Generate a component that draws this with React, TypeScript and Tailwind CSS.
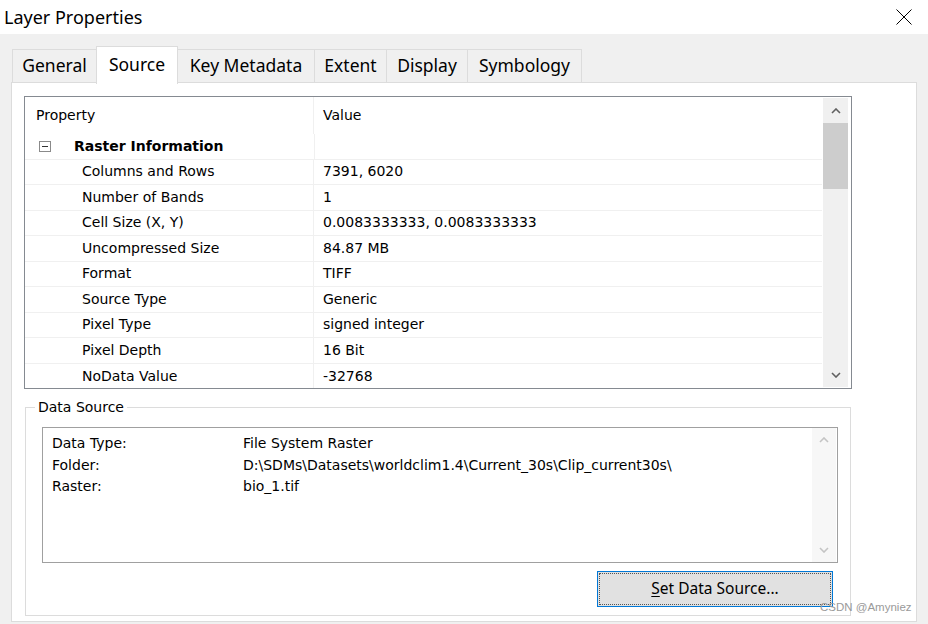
import type { FC } from 'react'

const tabs: [string, string][] = [
  ['General', 'w-[85px]'],
  ['Source', 'w-[82px]'],
  ['Key Metadata', 'w-[138px]'],
  ['Extent', 'w-[73px]'],
  ['Display', 'w-[82px]'],
  ['Symbology', 'w-[115px]'],
]

const rows: [string, string][] = [
  ['Columns and Rows', '7391, 6020'],
  ['Number of Bands', '1'],
  ['Cell Size (X, Y)', '0.0083333333, 0.0083333333'],
  ['Uncompressed Size', '84.87 MB'],
  ['Format', 'TIFF'],
  ['Source Type', 'Generic'],
  ['Pixel Type', 'signed integer'],
  ['Pixel Depth', '16 Bit'],
  ['NoData Value', '-32768'],
]

const sourceLines: [string, string][] = [
  ['Data Type:', 'File System Raster'],
  ['Folder:', 'D:\\SDMs\\Datasets\\worldclim1.4\\Current_30s\\Clip_current30s\\'],
  ['Raster:', 'bio_1.tif'],
]

const Chevron: FC<{ up?: boolean; color?: string }> = ({ up, color = '#606060' }) => (
  <svg width="10" height="6" viewBox="0 0 10 6">
    <path
      d={up ? 'M1 5 L5 1 L9 5' : 'M1 1 L5 5 L9 1'}
      fill="none"
      stroke={color}
      strokeWidth="1.6"
    />
  </svg>
)

const App: FC = () => {
  return (
    <div className="relative w-[928px] h-[624px] overflow-hidden bg-[#f0f0f0] text-black font-['Noto_Sans',sans-serif]">
      {/* Title bar */}
      <div className="flex h-[34px] items-center justify-between bg-white pl-[4px] pr-[16px]">
        <span className="text-[18px] leading-none">Layer Properties</span>
        <svg width="16" height="16" viewBox="0 0 16 16">
          <path d="M0.5 0.5 L15.5 15.5 M15.5 0.5 L0.5 15.5" stroke="#000" strokeWidth="1" />
        </svg>
      </div>

      <div className="pl-[11px] pt-[12px]">
        {/* Tabs */}
        <div className="relative z-10 flex h-[36px] items-end pl-[1px]">
          {tabs.map(([t, w]) =>
            t === 'Source' ? (
              <div
                key={t}
                className={`-mb-[2px] -ml-[1px] flex h-[38px] justify-center border border-b-0 border-[#dcdcdc] bg-white pt-[3px] text-[17.5px] leading-[28px] ${w}`}
              >
                {t}
              </div>
            ) : (
              <div
                key={t}
                className={`-ml-[1px] flex h-[33px] items-center justify-center border border-b-0 border-[#dcdcdc] bg-[#f0f0f0] text-[17.5px] leading-none first:ml-0 ${w}`}
              >
                {t}
              </div>
            ),
          )}
        </div>

        {/* Tab page */}
        <div className="h-[540px] w-[906px] border border-[#dcdcdc] bg-white pl-[12px] pt-[13px]">
          {/* Property grid */}
          <div className="flex h-[293px] w-[828px] overflow-hidden border border-[#858a91] font-['DejaVu_Sans',sans-serif] text-[14px]">
            <div className="flex w-[797px] flex-col">
              <div className="flex h-[37px] shrink-0 items-center">
                <div className="flex h-full w-[289px] items-center border-r border-[#f0f0f0] pl-[11px]">Property</div>
                <div className="pl-[9px]">Value</div>
              </div>
              <div className="flex h-[25.5px] shrink-0 items-center border-b border-[#f0f0f0]">
                <div className="flex h-full w-[289px] items-center">
                  <div className="ml-[14px] flex h-[11px] w-[12px] items-center justify-center border border-[#8a8a8a]">
                    <div className="h-[1px] w-[6px] bg-[#333]" />
                  </div>
                  <span className="ml-[23px] font-bold">Raster Information</span>
                </div>
                <div className="h-full border-l border-[#f0f0f0]" />
              </div>
              {rows.map(([k, v]) => (
                <div key={k} className="flex h-[25.5px] shrink-0 items-center border-b border-[#f0f0f0] last:border-b-0">
                  <div className="flex h-full w-[289px] items-center border-r border-[#f0f0f0] pl-[57px]">{k}</div>
                  <div className="pl-[9px]">{v}</div>
                </div>
              ))}
            </div>
            <div className="my-[1px] ml-[1px] flex w-[25px] flex-col items-center bg-[#f0f0f0]">
              <div className="flex h-[25px] items-center justify-center">
                <Chevron up />
              </div>
              <div className="h-[66px] w-full bg-[#cdcdcd]" />
              <div className="flex-1" />
              <div className="flex h-[25px] items-center justify-center">
                <Chevron />
              </div>
            </div>
          </div>

          {/* Data Source group */}
          <div className="relative mt-[18px] ml-[1px] h-[209px] w-[826px] border border-[#dcdcdc] font-['DejaVu_Sans',sans-serif] text-[14px]">
            <div className="absolute -top-[11px] left-[9px] bg-white px-[3px] leading-[20px]">Data Source</div>
            <div className="ml-[16px] mt-[19px] flex h-[136px] w-[796px] border border-[#a0a0a0]">
              <div className="flex-1 pl-[9px] pt-[5px] leading-[21.5px]">
                {sourceLines.map(([k, v]) => (
                  <div key={k} className="flex">
                    <span className="w-[191px]">{k}</span>
                    <span>{v}</span>
                  </div>
                ))}
              </div>
              <div className="mr-[1px] flex w-[24px] flex-col items-center justify-between bg-[#f7f7f7] py-[9px]">
                <Chevron up color="#c4c4c4" />
                <Chevron color="#c4c4c4" />
              </div>
            </div>
            <div className="mt-[8px] flex justify-end pr-[17px]">
              <div className="flex h-[36px] w-[236px] items-center justify-center border border-[#0078d7] bg-[#e1e1e1] p-[1px]">
                <div className="flex h-full w-full items-center justify-center border border-dotted border-[#555] text-[15.5px] font-['Noto_Sans',sans-serif]">
                  <span>
                    <span className="underline underline-offset-2">S</span>et Data Source...
                  </span>
                </div>
              </div>
            </div>
          </div>
        </div>
      </div>

      <div className="absolute left-[820px] top-[599px] font-['Liberation_Sans',sans-serif] text-[11.5px] text-[#9a9a9a]">
        CSDN @Amyniez
      </div>
    </div>
  )
}

export default App
